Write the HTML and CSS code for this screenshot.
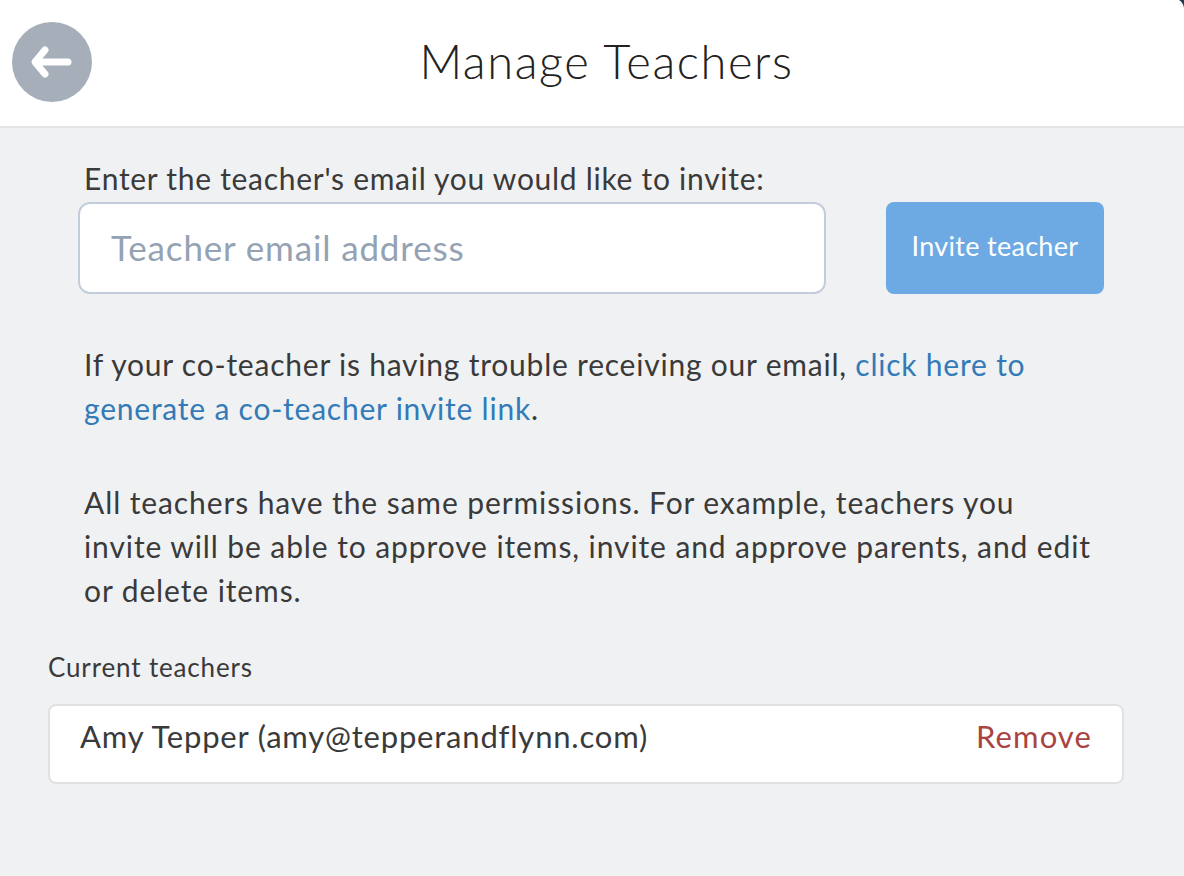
FILE: index.html
```html
<!DOCTYPE html>
<html>

	<head>
		<meta charset="UTF-8">
		<title>Manage Teachers</title>
		<link rel="stylesheet" href="styles.css">
	</head>

	<body>
		<svg class="corner" width="5" height="8" viewBox="0 0 5 8"><path d="M0 0H5V8C4.500 4.500 3 2 0 0Z" fill="#22394f" /></svg>
		<div id="header">
			<a class="back" href="#">
				<svg width="44" height="36" viewBox="0 0 44 36">
					<path d="M16 6L6 18L16 30M7 18H39" fill="none" stroke="#fff" stroke-width="7" stroke-linecap="round" stroke-linejoin="round" />
				</svg>
			</a>
			<h1>Manage Teachers</h1>
		</div>

		<div id="box">
			<label class="invite-label" for="mail">Enter the teacher's email you would like to invite:</label>
			<div class="invite-row">
				<input type="text" name="mail" id="mail" placeholder="Teacher email address" />
				<button>Invite teacher</button>
			</div>
			<p>If your co-teacher is having trouble receiving our email, <a href="#">click here to generate a co-teacher invite link</a>.</p>
			<p class="perm">All teachers have the same permissions. For example, teachers you invite will be able to approve items, invite and approve parents, and edit or delete items.</p>
		</div>

		<div id="teachers">
			<div class="title">Current teachers</div>
			<div class="item">
				<span>Amy Tepper (amy@tepperandflynn.com)</span>
				<a class="remove" href="#">Remove</a>
			</div>
		</div>
	</body>

</html>
```

FILE: styles.css
```css
* {
	box-sizing: border-box;
}

html, body {
	height: 100%;
}

body {
	margin: 0;
	background: #f0f1f3;
	color: #3a3a3a;
	font-family: "Lato", "Liberation Sans", sans-serif;
	overflow: hidden;
}

.corner {
	position: absolute;
	top: 0;
	right: 0;
}

#header {
	display: flex;
	align-items: center;
	height: 128px;
	padding: 0 12px 2px;
	background: #fff;
	border-bottom: 2px solid #e2e3e5;
}

.back {
	display: flex;
	align-items: center;
	justify-content: center;
	flex: none;
	width: 80px;
	height: 80px;
	padding-right: 2px;
	border-radius: 50%;
	background: #a5aeb9;
}

#header h1 {
	flex: 1;
	margin: 0 92px 2px 0;
	padding-left: 41px;
	color: #222;
	font-size: 47px;
	font-weight: 300;
	letter-spacing: 1.6px;
	line-height: 60px;
	text-align: center;
}

#box {
	padding: 27px 80px 0 78px;
}

.invite-label {
	display: block;
	padding-left: 6px;
	font-size: 30px;
	letter-spacing: 0.72px;
	line-height: 46px;
}

.invite-row {
	display: flex;
	justify-content: space-between;
	margin-top: 1px;
}

.invite-row input {
	width: 748px;
	height: 92px;
	padding: 0 31px 3px;
	border: 2px solid #c3ccda;
	border-radius: 12px;
	outline: none;
	background: #fff;
	font-family: inherit;
	font-size: 35px;
	letter-spacing: 0.85px;
}

.invite-row input::placeholder {
	color: #94a2b4;
	opacity: 1;
}

.invite-row button {
	width: 218px;
	height: 92px;
	padding: 0 0 6px;
	border: none;
	border-radius: 8px;
	background: #6daae3;
	color: #fff;
	font-family: inherit;
	font-size: 27px;
	letter-spacing: 0.3px;
	cursor: pointer;
}

#box p {
	margin: 48px 0 0;
	padding: 0 12px 0 6px;
	font-size: 30px;
	letter-spacing: 0.78px;
	line-height: 44px;
}

#box p.perm {
	margin-top: 50px;
	letter-spacing: 0.9px;
}

#box p a {
	color: #337ab7;
	text-decoration: none;
}

#teachers {
	padding: 37px 60px 0 48px;
}

#teachers .title {
	font-size: 26px;
	letter-spacing: 0.85px;
	line-height: 36px;
}

#teachers .item {
	display: flex;
	align-items: center;
	justify-content: space-between;
	height: 80px;
	margin-top: 19px;
	padding: 0 30px 16px;
	border: 2px solid #e0e1e3;
	border-radius: 8px;
	background: #fff;
	font-size: 31px;
	letter-spacing: 0.8px;
}

.remove {
	color: #a94442;
	letter-spacing: 1.1px;
	text-decoration: none;
}
```
